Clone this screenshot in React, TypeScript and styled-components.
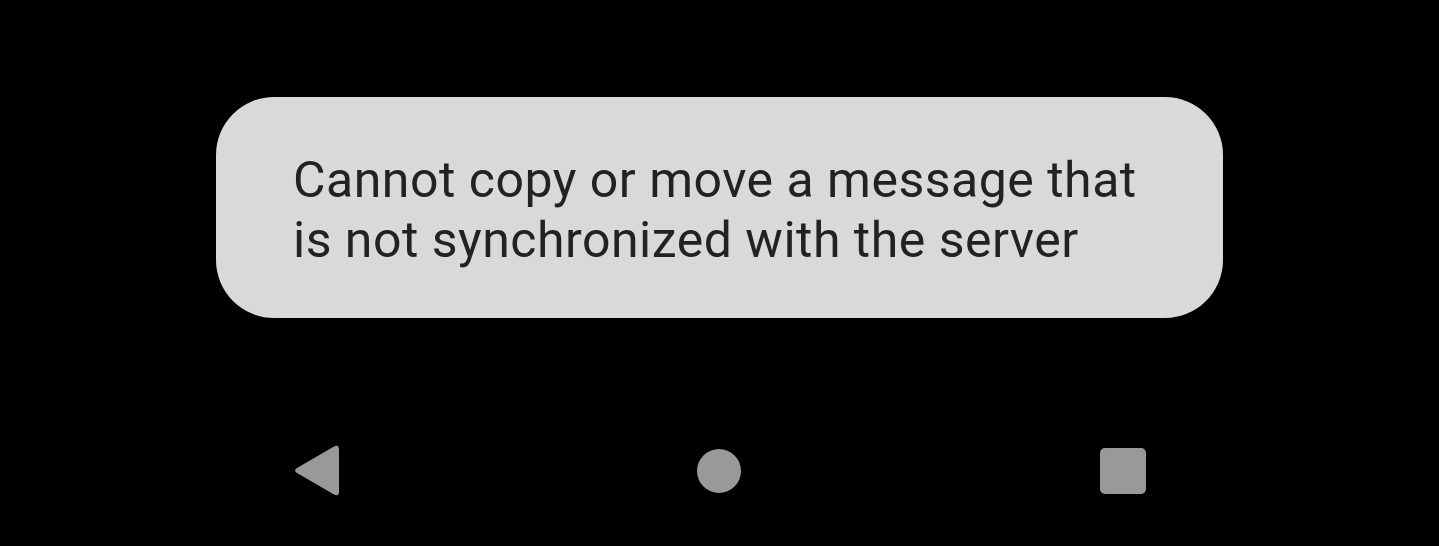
import React from 'react'
import styled, { createGlobalStyle } from 'styled-components';

const GlobalStyle = createGlobalStyle`
  html, body {
    margin: 0;
    padding: 0;
    background: #000;
  }
  body {
    font-family: Roboto, "Noto Sans", sans-serif;
  }
`;

const Screen = styled.div`
  width: 1439px;
  height: 546px;
  background: #000;
  display: flex;
  flex-direction: column;
  align-items: center;
  overflow: hidden;
`;

const Toast = styled.div`
  margin-top: 97px;
  width: 1007px;
  height: 221px;
  box-sizing: border-box;
  padding: 5px 40px 0 77px;
  background: #d9d9d9;
  border-radius: 58px;
  display: flex;
  align-items: center;
`;

const Message = styled.p`
  margin: 0;
  font-size: 50px;
  line-height: 60px;
  color: #222222;
  letter-spacing: 0.5px;
  white-space: nowrap;
`;

const NavBar = styled.nav`
  margin-top: 126px;
  width: 100%;
  display: grid;
  grid-template-columns: repeat(3, 1fr);
  align-items: center;
`;

const NavButton = styled.button<{ align: 'start' | 'center' | 'end' }>`
  justify-self: ${p => p.align};
  margin: ${p => p.align === 'start' ? '0 0 0 290px' : p.align === 'end' ? '0 290px 0 0' : '0'};
  width: 52px;
  height: 54px;
  padding: 0;
  border: none;
  background: transparent;
  display: flex;
  align-items: center;
  justify-content: center;

  svg {
    display: block;
    fill: #999999;
  }
`;

const App: React.FC = () => {
  return (
    <Screen>
      <GlobalStyle />
      <Toast>
        <Message>
          Cannot copy or move a message that<br />
          is not synchronized with the server
        </Message>
      </Toast>
      <NavBar>
        <NavButton align="start" aria-label="Back">
          <svg width="48" height="54" viewBox="0 0 48 54">
            <path d="M42 2.5 Q47 0 47 5.5 L47 47.5 Q47 53 42 50.5 L5 29 Q1 26.5 5 24 Z" />
          </svg>
        </NavButton>
        <NavButton align="center" aria-label="Home">
          <svg width="46" height="46" viewBox="0 0 46 46">
            <circle cx="23" cy="23" r="22" />
          </svg>
        </NavButton>
        <NavButton align="end" aria-label="Recents">
          <svg width="48" height="48" viewBox="0 0 48 48">
            <rect x="1" y="1" width="46" height="46" rx="5" />
          </svg>
        </NavButton>
      </NavBar>
    </Screen>
  )
}

export default App
